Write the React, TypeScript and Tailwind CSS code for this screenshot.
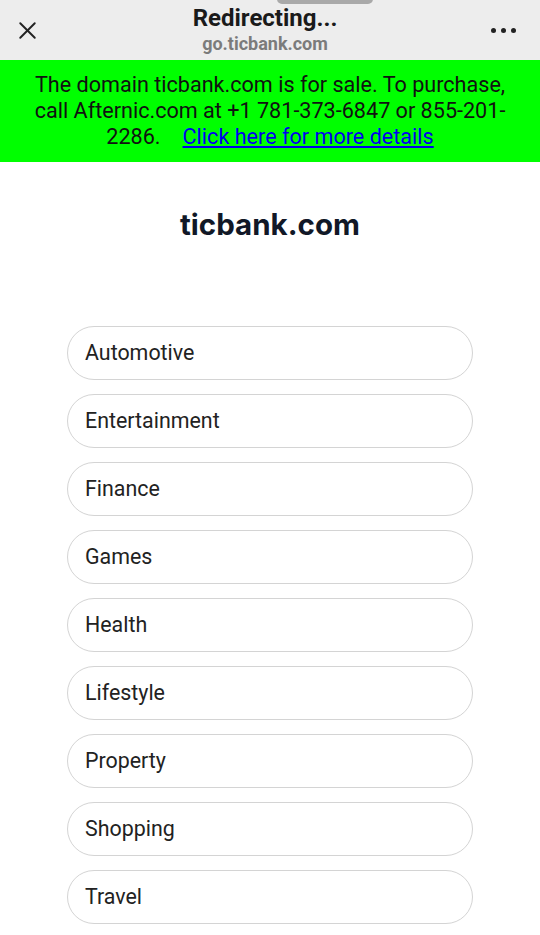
import { X } from "lucide-react";

const CATEGORIES = [
  "Automotive",
  "Entertainment",
  "Finance",
  "Games",
  "Health",
  "Lifestyle",
  "Property",
  "Shopping",
  "Travel",
];

export default function App() {
  return (
    <div className="min-h-[935px] bg-white font-['Roboto',sans-serif]">
      {/* top bar */}
      <div className="relative flex h-[60px] items-center bg-[#ededed] px-[13px]">
        <div className="absolute left-[277px] top-[-6px] h-[10px] w-[96px] rounded-md bg-[#a9a9a9]" />
        <X className="h-[29px] w-[29px] text-[#222]" strokeWidth={1.6} />
        <div className="flex flex-1 flex-col items-center self-start pt-[5px]">
          <div className="text-[24px] font-bold leading-[26px] text-[#1a1a1a]">Redirecting...</div>
          <div className="text-[18px] font-bold leading-[26px] text-[#7b7b7b]">go.ticbank.com</div>
        </div>
        <div className="mr-[11px] flex w-[28px] items-center justify-end gap-[5px]">
          <span className="h-[5px] w-[5px] shrink-0 rounded-full bg-[#222]" />
          <span className="h-[5px] w-[5px] shrink-0 rounded-full bg-[#222]" />
          <span className="h-[5px] w-[5px] shrink-0 rounded-full bg-[#222]" />
        </div>
      </div>

      {/* sale banner */}
      <div className="bg-[#00ff00] px-[28px] py-[12px] text-center text-[21.6px] leading-[26px] text-[#111]">
        The domain ticbank.com is for sale. To purchase, call Afternic.com at +1 781-373-6847 or 855-201-2286.
        <a href="#" className="ml-[22px] inline-block text-[#0000ee] underline">
          Click here for more details
        </a>
      </div>

      <h1 className="mt-[44px] text-center font-['Inter',sans-serif] text-[29.5px] font-bold leading-[36px] text-[#111827]">
        ticbank.com
      </h1>

      <div className="mx-[67px] mt-[84px] flex flex-col gap-[14px]">
        {CATEGORIES.map(c => (
          <div
            key={c}
            className="flex h-[54px] items-center rounded-full border border-[#d4d4d4] px-[17px] text-[21.4px] text-[#222]"
          >
            {c}
          </div>
        ))}
      </div>
    </div>
  );
}
